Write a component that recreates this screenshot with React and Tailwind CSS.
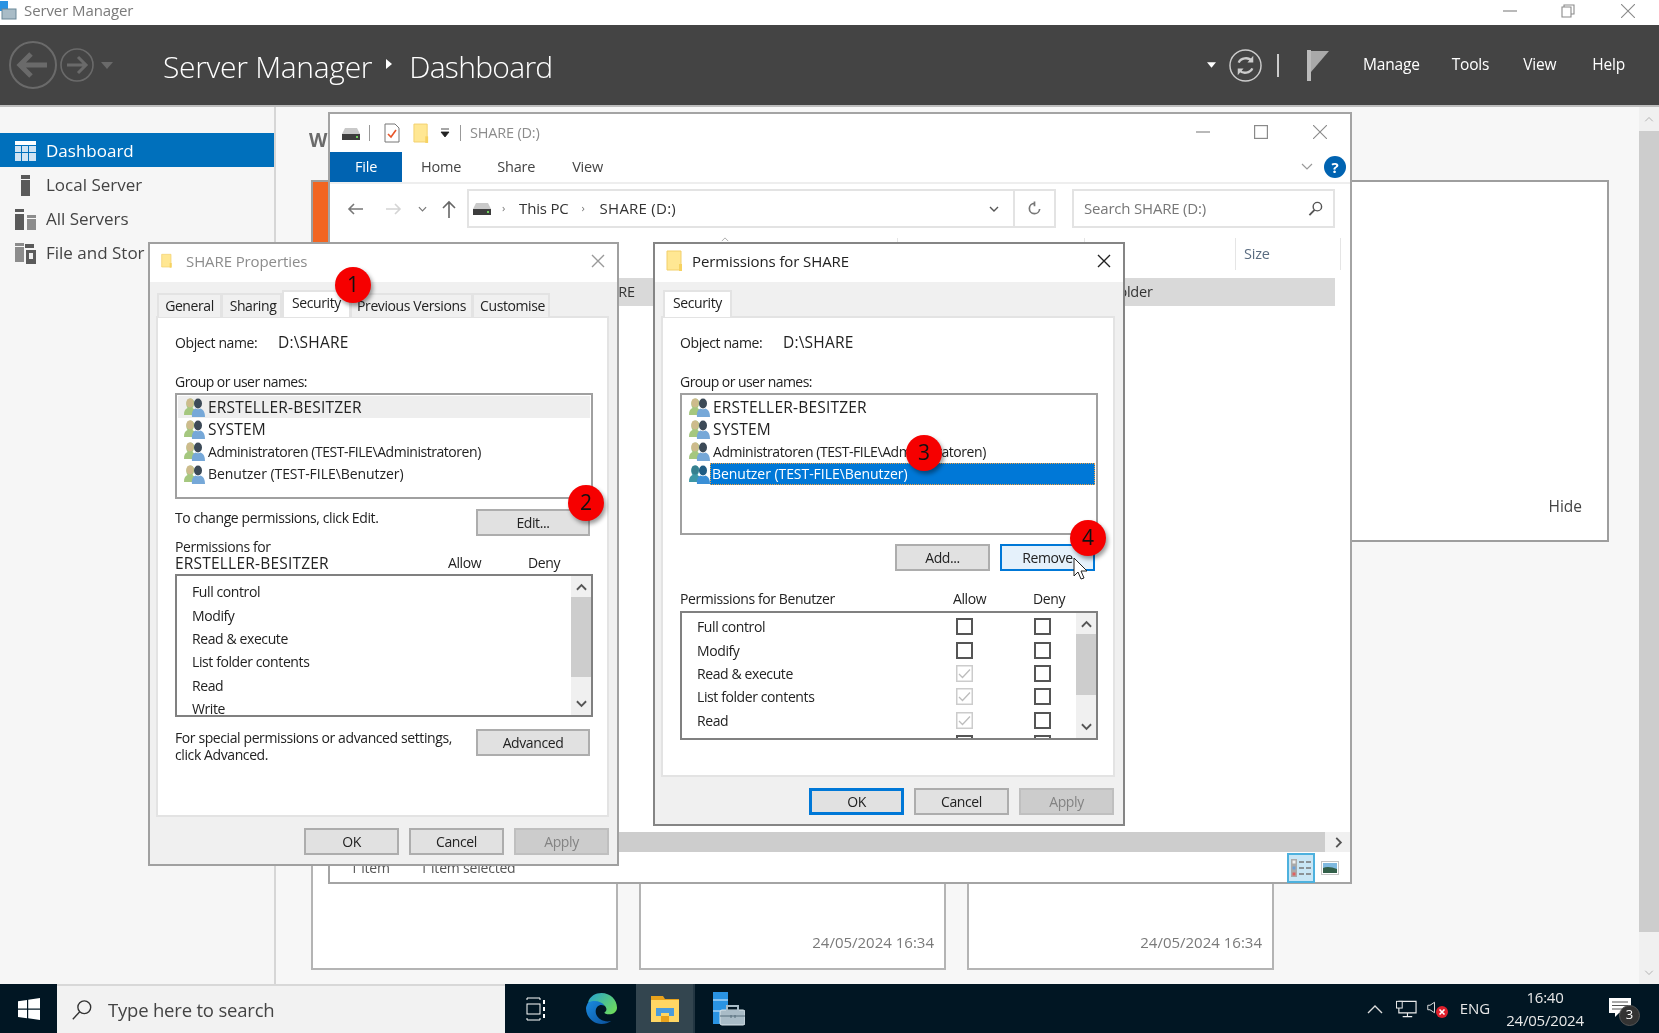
import React from "react";

const F = "font-['Open_Sans','Noto_Sans',sans-serif]";

function Folder({ cls = "w-[18px] h-[22px]" }) {
  return (
    <svg viewBox="0 0 18 22" className={cls}>
      <path d="M1 1h14v19H1z" fill="#ffe793" stroke="#f2cf6a" strokeWidth="1" />
      <path d="M13 14h3v7h-3z" fill="#f6d261" />
    </svg>
  );
}

function Drive({ cls = "w-[18px] h-[13px]" }) {
  return (
    <svg viewBox="0 0 18 13" className={cls}>
      <path d="M3 1h12l3 6v5H0V7z" fill="#c9c9c9" />
      <rect x="0" y="7" width="18" height="6" fill="#3d3d3d" />
      <rect x="14" y="9" width="2" height="2" fill="#6fd05c" />
    </svg>
  );
}

function Users({ selected }) {
  return (
    <svg viewBox="0 0 21 20" className="w-[21px] h-[20px] shrink-0">
      <path d="M0 18c0-4 1-6 3.500-7C1.500 8 2 2 6 1.500 9 1.500 11 4 10 7c-.3 2-1 3-1.500 4 2 1 3 3 3 7z" fill={selected ? "#3d97a6" : "#a5c77f"} />
      <ellipse cx="6" cy="6" rx="3.600" ry="4.400" fill={selected ? "#36808f" : "#cdbb8c"} />
      <path d="M8 20c-.5-5 1-7.500 3.500-8.500 1.500 1 3.500 1 5 0 2.500 1 4.500 3 4.500 8.500z" fill={selected ? "#3a8fd6" : "#76a8d8"} />
      <ellipse cx="14" cy="6.500" rx="4" ry="5" fill={selected ? "#1f5c84" : "#3c4a57"} />
    </svg>
  );
}

function Badge({ n, x, y }) {
  return (
    <div
      style={{ left: x - 18, top: y - 18 }}
      className={`absolute z-20 w-[36px] h-[36px] rounded-full bg-[#f60000] shadow-[2px_3px_4px_rgba(0,0,0,0.4)] flex items-center justify-center text-[21px] text-[#111] ${F}`}
    >
      {n}
    </div>
  );
}

function Btn({ children, w = "w-[95px]", cls = "bg-[#e1e1e1] border-[#adadad] text-[#222]" }) {
  return (
    <div className={`${w} h-[27px] shrink-0 border-2 flex items-center justify-center text-[14px] ${cls}`}>
      {children}
    </div>
  );
}

function Chevron({ up }) {
  return (
    <svg viewBox="0 0 12 8" className="w-[11px] h-[8px]">
      <path d={up ? "M1 7l5-5 5 5" : "M1 1l5 5 5-5"} fill="none" stroke="#555" strokeWidth="2" />
    </svg>
  );
}

function Scroll({ h, thumbTop, thumbH }) {
  return (
    <div className="w-[20px] shrink-0 flex flex-col bg-[#f0f0f0]" style={{ height: h }}>
      <div className="flex items-center justify-center shrink-0" style={{ height: thumbTop }}>
        <Chevron up />
      </div>
      <div className="bg-[#cdcdcd] shrink-0" style={{ height: thumbH }} />
      <div className="flex-1 flex items-end justify-center pb-[7px]">
        <Chevron />
      </div>
    </div>
  );
}

function Dialog({ title, active, x, y, w, h, tabs, panelH, icon, children }) {
  return (
    <div
      style={{ left: x, top: y, width: w, height: h }}
      className={`absolute border-2 ${active ? "border-[#858585]" : "border-[#a0a0a0]"} bg-[#f0f0f0] flex flex-col text-[14px] text-[#222] tracking-[-0.4px] ${F}`}
    >
      <div className="h-[38px] bg-white flex items-center pb-[4px] pl-[11px] pr-[10px] shrink-0">
        {icon}
        <span className={`text-[15px] tracking-[-0.1px] ${active ? "ml-[8px] text-[#222]" : "ml-[13px] text-[#8c8c8c]"}`}>{title}</span>
        <svg viewBox="0 0 14 14" className="ml-auto mr-[2px] w-[14px] h-[14px]">
          <path d="M1 1l12 12M13 1L1 13" stroke={active ? "#222" : "#999"} strokeWidth="1.4" />
        </svg>
      </div>
      <div className="h-[26px] mt-[9px] pl-[8px] flex items-end shrink-0 relative z-10 -mb-[1px]">
        {tabs.map((t) => (
          <div
            key={t.label}
            style={{ width: t.w }}
            className={
              t.on
                ? "h-[27px] bg-white border-2 border-b-0 border-[#e3e3e3] flex items-center justify-center pb-[4px]"
                : `h-[24px] bg-[#f0f0f0] border-2 border-b-0 border-[#e3e3e3] -ml-[1px] flex items-center justify-center pb-[2px] ${t.cls || ""}`
            }
          >
            {t.label}
          </div>
        ))}
      </div>
      <div
        style={{ height: panelH }}
        className="ml-[6px] mr-[8px] shrink-0 bg-white border-2 border-[#e3e3e3] pl-[17px] pt-[14px]"
      >
        {children}
      </div>
      <div className={`flex justify-end gap-[10px] mt-[11px] ${active ? "pr-[9px]" : "pr-[8px]"}`}>
        <Btn cls={active ? "bg-[#e1e1e1] border-[#0078d7] border-[3px] text-[#222]" : "bg-[#e1e1e1] border-[#adadad] text-[#222]"}>OK</Btn>
        <Btn>Cancel</Btn>
        <Btn cls="bg-[#cccccc] border-[#bfbfbf] text-[#838383]">Apply</Btn>
      </div>
    </div>
  );
}

function Caps({ children }) {
  return <span className="pt-[1px] text-[15.5px] tracking-[0.2px]">{children}</span>;
}

function ObjName() {
  return (
    <>
      <div className="h-[20px] flex items-center">
        <span className="w-[103px]">Object name:</span>
        <Caps>D:\SHARE</Caps>
      </div>
      <div className="h-[20px] mt-[19px] flex items-center tracking-[-0.55px]">Group or user names:</div>
    </>
  );
}

const NAMES = ["ERSTELLER-BESITZER", "SYSTEM", "Administratoren (TEST-FILE\\Administratoren)", "Benutzer (TEST-FILE\\Benutzer)"];

function Name({ i }) {
  if (i < 2) return <Caps>{NAMES[i]}</Caps>;
  if (i === 2) return <span className="tracking-[-0.45px]">{NAMES[i]}</span>;
  return <span className="tracking-[-0.05px]">{NAMES[i]}</span>;
}

function Properties() {
  const perms = ["Full control", "Modify", "Read & execute", "List folder contents", "Read", "Write"];
  return (
    <Dialog
      title="SHARE Properties"
      x={148}
      y={242}
      w={471}
      h={624}
      panelH={501}
      icon={<Folder cls="w-[12px] h-[20px]" />}
      tabs={[
        { label: "General", w: 65 },
        { label: "Sharing", w: 61, cls: "pl-[3px]" },
        { label: "Security", w: 69, on: true },
        { label: "Previous Versions", w: 123 },
        { label: "Customise", w: 78, cls: "pl-[3px]" },
      ]}
    >
      <ObjName />
      <div className="w-[418px] h-[106px] mt-[2px] border-2 border-[#a0a0a0] bg-white pt-[1px] px-[1px]">
        {NAMES.map((n, i) => (
          <div key={n} className={`h-[22.2px] flex items-center pl-[6px] gap-[3px] ${i === 0 ? "bg-[#eeeeee]" : ""}`}>
            <Users />
            <Name i={i} />
          </div>
        ))}
      </div>
      <div className="w-[415px] mt-[10px] flex">
        <span className="leading-[17px]">To change permissions, click Edit.</span>
        <div className="ml-auto"><Btn w="w-[114px]">Edit...</Btn></div>
      </div>
      <div className="mt-[2px] leading-[16px] w-[418px]">
        <div className="pt-[1px]">Permissions for</div>
        <div className="flex items-center">
          <span className="w-[273px] text-[15.5px] tracking-[0.2px]">ERSTELLER-BESITZER</span>
          <span className="w-[80px]">Allow</span>
          <span>Deny</span>
        </div>
      </div>
      <div className="w-[418px] h-[143px] mt-[3px] border-2 border-[#808080] flex overflow-hidden">
        <div className="flex-1 pl-[15px] pt-[4px]">
          {perms.map((p) => (
            <div key={p} className="h-[23.4px] flex items-center">{p}</div>
          ))}
        </div>
        <Scroll h={139} thumbTop={21} thumbH={80} />
      </div>
      <div className="w-[415px] mt-[12px] flex">
        <div className="leading-[17px]">
          <div>For special permissions or advanced settings,</div>
          <div>click Advanced.</div>
        </div>
        <div className="ml-auto"><Btn w="w-[114px]">Advanced</Btn></div>
      </div>
    </Dialog>
  );
}

function Box({ on }) {
  return on ? (
    <svg viewBox="0 0 17 17" className="w-[17px] h-[17px]">
      <rect x="0.75" y="0.75" width="15.5" height="15.5" fill="#fff" stroke="#cccccc" strokeWidth="1.5" />
      <path d="M3 9l3.5 3.5L14 4.5" fill="none" stroke="#bdbdbd" strokeWidth="1.3" />
    </svg>
  ) : (
    <div className="w-[17px] h-[17px] border-2 border-[#555] bg-white" />
  );
}

function Permissions() {
  const perms = [
    ["Full control", false],
    ["Modify", false],
    ["Read & execute", true],
    ["List folder contents", true],
    ["Read", true],
    ["", false],
  ];
  return (
    <Dialog
      active
      title="Permissions for SHARE"
      x={653}
      y={242}
      w={472}
      h={584}
      panelH={461}
      icon={<Folder />}
      tabs={[{ label: "Security", w: 69, on: true }]}
    >
      <ObjName />
      <div className="w-[418px] h-[142px] mt-[2px] border-2 border-[#a0a0a0] bg-white pt-[1px] px-[1px]">
        {NAMES.map((n, i) => (
          <div key={n} className="h-[22.2px] flex items-center pl-[6px]">
            <Users selected={i === 3} />
            {i === 3 ? (
              <span className="pl-[1px] w-[386px] h-[22px] flex items-center bg-[#0078d7] text-white border border-dotted border-[#f0a040] tracking-[-0.05px]">{n}</span>
            ) : (
              <span className="ml-[3px] flex"><Name i={i} /></span>
            )}
          </div>
        ))}
      </div>
      <div className="w-[415px] mt-[9px] flex justify-end gap-[10px]">
        <Btn>Add...</Btn>
        <Btn cls="bg-[#e5f1fb] border-[#0078d7] text-[#222]">Remove</Btn>
      </div>
      <div className="w-[418px] mt-[17px] h-[20px] flex items-center">
        <span className="w-[273px]">Permissions for Benutzer</span>
        <span className="w-[80px]">Allow</span>
        <span>Deny</span>
      </div>
      <div className="w-[418px] h-[129px] mt-[3px] border-2 border-[#808080] flex overflow-hidden">
        <div className="flex-1 pl-[15px] pt-[2px]">
          {perms.map(([p, on], i) => (
            <div key={i} className="h-[23.4px] flex items-center">
              <span className="w-[259px]">{p}</span>
              <Box on={on} />
              <span className="w-[61px]" />
              <Box />
            </div>
          ))}
        </div>
        <Scroll h={125} thumbTop={21} thumbH={61} />
      </div>
    </Dialog>
  );
}

function WinCtl() {
  const c = "#8a8a8a";
  return (
    <div className="flex items-center -mt-[3px]">
      <svg viewBox="0 0 14 14" className="w-[14px] h-[14px]"><path d="M0 7h14" stroke={c} strokeWidth="1.2" /></svg>
      <svg viewBox="0 0 14 14" className="ml-[44px] w-[14px] h-[14px]"><rect x="0.6" y="0.6" width="12.8" height="12.8" fill="none" stroke={c} strokeWidth="1.2" /></svg>
      <svg viewBox="0 0 14 14" className="ml-[45px] w-[14px] h-[14px]"><path d="M0 0l14 14M14 0L0 14" stroke={c} strokeWidth="1.1" /></svg>
    </div>
  );
}

function Explorer() {
  return (
    <div className={`absolute left-[328px] top-[112px] w-[1024px] h-[772px] bg-white border-2 border-[#a4a4a4] flex flex-col text-[14.5px] tracking-[-0.2px] text-[#333] ${F}`}>
      <div className="h-[38px] shrink-0 flex items-center pl-[12px] pr-[23px] text-[#8c8c8c]">
        <Drive />
        <span className="w-px h-[16px] bg-[#999] ml-[9px]" />
        <svg viewBox="0 0 16 20" className="ml-[14px] w-[16px] h-[20px]">
          <path d="M1 1h10l4 4v14H1z" fill="#fff" stroke="#777" />
          <path d="M4 11l3 3 5-7" fill="none" stroke="#e8562a" strokeWidth="1.6" />
        </svg>
        <Folder cls="ml-[13px] w-[17px] h-[21px]" />
        <svg viewBox="0 0 10 10" className="ml-[10px] w-[10px] h-[10px]">
          <path d="M1 1h8M1 4h8l-4 5z" fill="#222" stroke="#222" strokeWidth="0.8" />
        </svg>
        <span className="w-px h-[16px] bg-[#999] ml-[10px]" />
        <span className="ml-[9px]">SHARE (D:)</span>
        <div className="ml-auto"><WinCtl /></div>
      </div>
      <div className="h-[30px] shrink-0 flex items-center border-b-2 border-[#eeeeee] box-content pr-[3px]">
        <div className="w-[72px] h-full bg-[#0063b1] text-white flex items-center justify-center">File</div>
        <span className="ml-[19px] text-[#444]">Home</span>
        <span className="ml-[36px] text-[#444]">Share</span>
        <span className="ml-[37px] text-[#444]">View</span>
        <svg viewBox="0 0 12 8" className="ml-auto w-[12px] h-[8px]"><path d="M1 1l5 5 5-5" fill="none" stroke="#999" strokeWidth="1.2" /></svg>
        <div className="ml-[11px] mr-[1px] w-[22px] h-[22px] rounded-full bg-[#0063b1] text-white font-bold flex items-center justify-center text-[15px]">?</div>
      </div>
      <div className="h-[39px] mt-[5px] shrink-0 flex items-center pl-[17px] text-[15px]">
        <svg viewBox="0 0 16 14" className="w-[16px] h-[14px]"><path d="M16 7H2M7 2L2 7l5 5" fill="none" stroke="#777" strokeWidth="1.6" /></svg>
        <svg viewBox="0 0 16 14" className="ml-[23px] w-[16px] h-[14px]"><path d="M0 7h14M9 2l5 5-5 5" fill="none" stroke="#d4d4d4" strokeWidth="1.6" /></svg>
        <svg viewBox="0 0 10 6" className="ml-[16px] w-[9px] h-[6px]"><path d="M1 1l4 4 4-4" fill="none" stroke="#777" strokeWidth="1.3" /></svg>
        <svg viewBox="0 0 14 18" className="ml-[15px] w-[14px] h-[18px]"><path d="M7 18V2M1 8l6-6 6 6" fill="none" stroke="#666" strokeWidth="1.6" /></svg>
        <div className="ml-[11px] w-[589px] h-[39px] border-2 border-[#e3e3e3] flex items-center pl-[4px] text-[#333]">
          <Drive />
          <span className="ml-[11px] text-[#777] text-[11px]">›</span>
          <span className="ml-[14px]">This PC</span>
          <span className="ml-[13px] text-[#777] text-[11px]">›</span>
          <span className="ml-[15px] tracking-[0.25px]">SHARE (D:)</span>
          <svg viewBox="0 0 10 6" className="ml-auto mr-[14px] w-[10px] h-[6px]"><path d="M1 1l4 4 4-4" fill="none" stroke="#555" strokeWidth="1.4" /></svg>
          <div className="w-[2px] h-full bg-[#e3e3e3]" />
          <svg viewBox="0 0 16 16" className="mx-[12px] w-[15px] h-[16px]">
            <path d="M8 2a5.5 5.5 0 1 0 5.500 6M8 0v5" fill="none" stroke="#777" strokeWidth="1.8" />
          </svg>
        </div>
        <div className="ml-[16px] w-[263px] h-[39px] border-2 border-[#e3e3e3] flex items-center pl-[10px] pr-[10px] text-[#777]">
          <span>Search SHARE (D:)</span>
          <svg viewBox="0 0 16 16" className="ml-auto w-[15px] h-[15px]">
            <circle cx="10" cy="6" r="4.5" fill="none" stroke="#555" strokeWidth="1.5" />
            <path d="M7 9.5L1.5 15" stroke="#555" strokeWidth="2" />
          </svg>
        </div>
      </div>
      <div className="h-[40px] mt-[6px] shrink-0 flex items-center relative">
        <span className="w-[391px]" />
        <svg viewBox="0 0 10 6" className="w-[8px] h-[5px] -mt-[30px]"><path d="M1 5l4-4 4 4" fill="none" stroke="#999" /></svg>
        <span className="ml-[168px] w-px h-[32px] bg-[#e5e5e5]" />
        <span className="ml-[186px] w-px h-[32px] bg-[#e5e5e5]" />
        <span className="ml-[150px] w-px h-[32px] bg-[#e5e5e5]" />
        <span className="ml-[8px] text-[#5a6c80]">Size</span>
        <span className="ml-[70px] w-px h-[32px] bg-[#e5e5e5]" />
      </div>
      <div className="h-[28px] mt-[4px] shrink-0 ml-[253px] mr-[15px] bg-[#d9d9d9] flex items-center text-[#333]">
        <span className="ml-[8px] w-[497px]">SHARE</span>
        <span>File folder</span>
      </div>
      <div className="flex-1" />
      <div className="h-[20px] shrink-0 flex">
        <div className="flex-1 bg-[#cdcdcd]" />
        <div className="w-[25px] bg-[#f0f0f0] flex items-center justify-center pl-[3px]">
          <svg viewBox="0 0 8 12" className="w-[8px] h-[11px]"><path d="M1 1l5 5-5 5" fill="none" stroke="#555" strokeWidth="2" /></svg>
        </div>
      </div>
      <div className="h-[30px] shrink-0 flex items-center pl-[20px] text-[14px] text-[#555] pt-[1px]">
        <span>1 item</span>
        <span className="ml-[30px]">1 item selected</span>
        <div className="ml-auto w-[28px] h-[30px] bg-[#c9e6f5] border-2 border-[#4db1de] flex items-center justify-center">
          <svg viewBox="0 0 20 18" className="w-[20px] h-[18px]">
            <rect x="0" y="0" width="6" height="18" fill="#aaa" />
            <rect x="1.500" y="1.500" width="3" height="3" fill="#eee" />
            <rect x="1.500" y="7.500" width="3" height="3" fill="#6aa0d8" />
            <rect x="1.500" y="13.500" width="3" height="3" fill="#e06060" />
            <path d="M8 3h5M15 3h5M8 9h5M15 9h5M8 15h5M15 15h5" stroke="#777" strokeWidth="1.400" />
          </svg>
        </div>
        <div className="w-[29px] flex justify-center">
          <svg viewBox="0 0 18 14" className="w-[18px] h-[14px]">
            <rect x="0" y="0" width="18" height="14" fill="#c4c4c4" />
            <rect x="1" y="1" width="16" height="12" fill="#fff" />
            <rect x="2" y="2" width="14" height="10" fill="#7fb9df" />
            <path d="M2 7c4-2 9-1 14 1v4H2z" fill="#33604a" />
          </svg>
        </div>
        <span className="w-[6px]" />
      </div>
    </div>
  );
}

function Sidebar() {
  const Ic = ({ k }) => {
    const c = k === "d" ? "#fff" : "#5a5a5a";
    if (k === "d")
      return (
        <svg viewBox="0 0 21 20" className="w-[21px] h-[20px]">
          <rect width="21" height="4" fill="#fff" />
          <path d="M0 5h6v6H0zM7 5h6v6H7zM14 5h7v6h-7zM0 12h6v8H0zM7 12h6v8H7zM14 12h7v8h-7z" fill="#cfe3f3" />
        </svg>
      );
    if (k === "l")
      return (
        <svg viewBox="0 0 21 21" className="w-[21px] h-[21px]">
          <path d="M6 0h9v4H6zM6 5h9v16H6z" fill={c} />
        </svg>
      );
    if (k === "a")
      return (
        <svg viewBox="0 0 21 21" className="w-[21px] h-[21px]">
          <path d="M0 0h9v3H0zM0 5h9v16H0z" fill={c} />
          <path d="M12 6h9v3h-9zM12 10h9v11h-9z" fill="#8c8c8c" />
        </svg>
      );
    return (
      <svg viewBox="0 0 21 22" className="w-[21px] h-[22px]">
        <path d="M0 1h9v3H0zM0 5h9v15H0z" fill="#8c8c8c" />
        <path d="M10 2h9v4h-9z" fill="#5a5a5a" />
        <path d="M11 8h10v14H11z" fill="#5a5a5a" />
        <path d="M14 11h4v6h-4z" fill="#eee" />
      </svg>
    );
  };
  return (
    <div className={`w-[276px] shrink-0 bg-[#f6f6f6] border-r-2 border-[#d6d6d6] pt-[26px] text-[17px] text-[#444] ${F}`}>
      {[["d", "Dashboard"], ["l", "Local Server"], ["a", "All Servers"], ["f", "File and Stor"]].map(([k, t]) => (
        <div key={k} className={`h-[34px] flex items-center pl-[15px] pt-[2px] gap-[10px] whitespace-nowrap overflow-hidden ${k === "d" ? "bg-[#0070bc] text-white" : ""}`}>
          <Ic k={k} />
          <span>{t}</span>
        </div>
      ))}
    </div>
  );
}

function Tile({ stamp }) {
  return (
    <div className="w-[307px] h-[440px] bg-white border-2 border-[#b4b4b4] flex items-end justify-end pr-[10px] pb-[15px] text-[15px] text-[#7a7a7a]">
      {stamp && "24/05/2024 16:34"}
    </div>
  );
}

function Main() {
  return (
    <div className={`flex-1 min-w-0 bg-[#f7f7f7] pl-[35px] pr-[30px] ${F}`}>
      <div className="h-[73px] flex items-end pb-[26px] -ml-[2px] text-[19px] font-bold text-[#6b6b6b]">W</div>
      <div className="h-[362px] bg-white border-2 border-[#9e9e9e] flex">
        <div className="w-[40px] bg-[#f26522]" />
        <div className="flex-1 flex items-end justify-end pr-[25px] pb-[22px] text-[15.5px] text-[#444]">Hide</div>
      </div>
      <div className="mt-[-12px] flex gap-[21px]">
        <Tile />
        <Tile stamp />
        <Tile stamp />
      </div>
    </div>
  );
}

function Taskbar() {
  return (
    <div className={`h-[49px] shrink-0 bg-[#011623] flex items-center text-white ${F}`}>
      <div className="w-[57px] flex justify-center">
        <svg viewBox="0 0 22 22" className="w-[22px] h-[22px]">
          <path d="M0 3.2l9-1.3v8.6H0zM10.2 1.7L22 0v10.5H10.2zM0 11.7h9v8.5l-9-1.3zM10.200 11.700H22V22l-11.800-1.700z" fill="#fff" />
        </svg>
      </div>
      <div className="w-[448px] h-[49px] bg-[#f2f2f2] border-t-2 border-[#d8d8d8] flex items-center pl-[14px] text-[#444] text-[18.5px] tracking-[-0.2px]">
        <svg viewBox="0 0 24 24" className="w-[22px] h-[22px]">
          <circle cx="14.5" cy="9" r="7" fill="none" stroke="#333" strokeWidth="1.5" />
          <path d="M9.5 14L2 22" stroke="#333" strokeWidth="1.5" />
        </svg>
        <span className="ml-[15px]">Type here to search</span>
      </div>
      <svg viewBox="0 0 20 24" className="ml-[21px] w-[20px] h-[24px]">
        <path d="M1 1h13M1 23h13M1 21v2M14 21v2M1 1v2M14 1v2" stroke="#fff" fill="none" />
        <rect x="1" y="7" width="13" height="10" fill="none" stroke="#fff" />
        <path d="M18 3v4M18 10v4M18 17v4" stroke="#fff" strokeWidth="2" />
      </svg>
      <svg viewBox="0 0 32 34" className="ml-[40px] w-[31px] h-[33px]">
        <defs>
          <linearGradient id="edgeA" x1="0" y1="0.2" x2="1" y2="0.8">
            <stop offset="0" stopColor="#2aa5c8" />
            <stop offset="1" stopColor="#6fdc5a" />
          </linearGradient>
          <linearGradient id="edgeB" x1="0" y1="0" x2="1" y2="1">
            <stop offset="0" stopColor="#1a8be0" />
            <stop offset="1" stopColor="#0a4f9a" />
          </linearGradient>
        </defs>
        <path d="M2 11C4 4 10 1 16 1c9 0 16 7 16 15 0 4-3 7-8 7-3 0-5-1-5-2 2-1 3-3 1-6-3-4-13-6-18-4z" fill="url(#edgeA)" />
        <path d="M2 11c5-3 14-2 17 3-5-2-9 1-9 6 0 6 7 12 16 10-3 2-6 3-10 3C8 33 0 26 0 17c0-2 1-4 2-6z" fill="url(#edgeB)" />
      </svg>
      <div className="ml-[19px] w-[59px] h-[49px] bg-[#33454f] border-r-2 border-[#233642] flex items-center justify-center">
        <svg viewBox="0 0 28 26" className="w-[28px] h-[26px]">
          <path d="M0 0h12l2 3h14v4H0z" fill="#e8a21c" />
          <path d="M0 4h28v22H0z" fill="#ffd664" />
          <path d="M5 20v-8h18v8h-5v-3h-8v3z" fill="#4a9bdc" />
          <path d="M10 20h8v6h-8z" fill="#e8a21c" />
        </svg>
      </div>
      <svg viewBox="0 0 32 36" className="ml-[18px] mt-[3px] w-[32px] h-[36px]">
        <rect x="0" y="0" width="15" height="32" fill="#2a93e2" />
        <path d="M0 8h15M0 19h15" stroke="#dff2ff" strokeWidth="1.200" />
        <rect x="7" y="18" width="25" height="15" rx="2" fill="#a9bcc7" stroke="#d9e4ea" />
        <rect x="14" y="14" width="11" height="5" fill="none" stroke="#a9bcc7" strokeWidth="2" />
        <path d="M7 24h25M18 23v3M22 23v3" stroke="#566f7d" />
      </svg>
      <div className="ml-auto flex items-center text-[15px] text-[#e8e8e8]">
        <svg viewBox="0 0 16 10" className="w-[16px] h-[10px]"><path d="M1 9l7-7 7 7" fill="none" stroke="#ddd" strokeWidth="1.4" /></svg>
        <svg viewBox="0 0 22 18" className="ml-[13px] w-[21px] h-[18px]">
          <path d="M3 1h18v12H3zM12 13v4M7 17h10" fill="none" stroke="#eee" strokeWidth="1.2" />
          <rect x="0.5" y="1" width="6" height="7" fill="#011623" stroke="#eee" />
        </svg>
        <div className="ml-[10px] relative w-[21px] h-[18px]">
          <svg viewBox="0 0 12 16" className="w-[9px] h-[15px]"><path d="M1 5h3l6-4v14l-6-4H1z" fill="none" stroke="#ddd" strokeWidth="1.3" /></svg>
          <svg viewBox="0 0 12 12" className="absolute right-0 bottom-0 w-[12px] h-[12px]">
            <circle cx="6" cy="6" r="6" fill="#e0202c" />
            <path d="M3.500 3.500l5 5M8.500 3.500l-5 5" stroke="#fff" strokeWidth="1.600" />
          </svg>
        </div>
        <span className="ml-[2px] w-[50px] text-center">ENG</span>
        <div className="ml-[6px] w-[78px] text-center leading-[23px] tracking-[-0.2px]">
          <div>16:40</div>
          <div>24/05/2024</div>
        </div>
        <div className="ml-[25px] mr-[28px] relative w-[22px] h-[22px]">
          <svg viewBox="0 0 22 20" className="w-[22px] h-[20px]">
            <path d="M0 0h22v15H10l-4 4v-4H0z" fill="#fff" />
            <path d="M3 4h16M3 7.500h16M3 11h11" stroke="#555" />
          </svg>
          <div className="absolute left-[10px] top-[7px] w-[21px] h-[21px] rounded-full bg-[#333] border border-[#555] flex items-center justify-center text-[13px] text-white">3</div>
        </div>
      </div>
    </div>
  );
}

export default function App() {
  return (
    <div className={`relative w-[1659px] h-[1033px] overflow-hidden flex flex-col bg-white blur-[0.35px] ${F}`}>
      <div className="h-[25px] shrink-0 bg-white flex items-center text-[15px] text-[#7a7a7a] tracking-[-0.1px] pr-[24px] pb-[4px]">
        <svg viewBox="0 0 17 19" className="w-[17px] h-[19px]">
          <rect x="0" y="0" width="8" height="10" fill="#2a93e2" />
          <rect x="2" y="8" width="14" height="10" fill="#a9bcc7" stroke="#6a8797" />
        </svg>
        <span className="ml-[7px]">Server Manager</span>
        <div className="ml-auto flex items-center">
          <svg viewBox="0 0 14 14" className="w-[14px] h-[14px]"><path d="M0 7h14" stroke="#8a8a8a" strokeWidth="1.2" /></svg>
          <svg viewBox="0 0 14 14" className="ml-[44px] w-[14px] h-[14px]">
            <path d="M3 3V1h10v9h-3M1 3h9v10H1z" fill="none" stroke="#8a8a8a" strokeWidth="1.1" />
          </svg>
          <svg viewBox="0 0 14 14" className="ml-[46px] w-[14px] h-[14px]"><path d="M0 0l14 14M14 0L0 14" stroke="#8a8a8a" strokeWidth="1.1" /></svg>
        </div>
      </div>
      <div className="h-[82px] shrink-0 bg-[#444444] border-b-2 border-[#bdbdbd] flex items-center pl-[9px] text-white">
        <svg viewBox="0 0 48 48" className="w-[48px] h-[48px]">
          <circle cx="24" cy="24" r="23" fill="none" stroke="#6a6a6a" strokeWidth="2" />
          <path d="M38 24H12M22 13L11 24l11 11" fill="none" stroke="#6a6a6a" strokeWidth="5" />
        </svg>
        <svg viewBox="0 0 34 34" className="ml-[3px] w-[34px] h-[34px]">
          <circle cx="17" cy="17" r="16" fill="none" stroke="#6a6a6a" strokeWidth="1.6" />
          <path d="M7 17h18M18 9l8 8-8 8" fill="none" stroke="#6a6a6a" strokeWidth="3" />
        </svg>
        <svg viewBox="0 0 12 7" className="ml-[7px] w-[12px] h-[7px]"><path d="M0 0h12L6 7z" fill="#6a6a6a" /></svg>
        <span className="ml-[50px] pt-[2px] text-[30px] font-light tracking-[-0.3px]">Server Manager</span>
        <svg viewBox="0 0 6 10" className="ml-[14px] w-[6px] h-[10px] -mt-[2px]"><path d="M0 0l6 5-6 5z" fill="#fff" /></svg>
        <span className="ml-[17px] pt-[2px] text-[30px] font-light tracking-[-0.7px]">Dashboard</span>
        <div className="ml-auto flex items-center pr-[34px] text-[15.5px] tracking-[-0.2px]">
          <svg viewBox="0 0 10 6" className="w-[9px] h-[6px]"><path d="M0 0h10L5 6z" fill="#fff" /></svg>
          <svg viewBox="0 0 34 34" className="ml-[13px] w-[33px] h-[33px]">
            <circle cx="17" cy="17" r="16" fill="none" stroke="#ccc" strokeWidth="1.5" />
            <path d="M10 14c2-5 10-6 13-2M24 20c-2 5-10 6-13 2" fill="none" stroke="#ccc" strokeWidth="2.4" />
            <path d="M25 7v7h-6zM9 27v-7h6z" fill="#ccc" />
          </svg>
          <span className="ml-[15px] w-[2px] h-[23px] bg-[#ccc]" />
          <svg viewBox="0 0 22 31" className="ml-[28px] w-[22px] h-[31px]">
            <rect x="0" y="0" width="4" height="31" fill="#bbb" />
            <path d="M4 1h18L4 22z" fill="#a9a9a9" />
          </svg>
          <span className="ml-[34px]">Manage</span>
          <span className="ml-[32px]">Tools</span>
          <span className="ml-[34px]">View</span>
          <span className="ml-[36px]">Help</span>
        </div>
      </div>
      <div className="flex-1 min-h-0 flex overflow-hidden">
        <Sidebar />
        <Main />
        <div className="w-[20px] shrink-0 bg-[#f0f0f0] flex flex-col">
          <div className="h-[24px] flex items-center justify-center">
            <svg viewBox="0 0 12 8" className="w-[10px] h-[6px]"><path d="M1 7l5-5 5 5" fill="none" stroke="#aaa" strokeWidth="1.2" /></svg>
          </div>
          <div className="h-[801px] bg-[#cdcdcd]" />
          <div className="flex-1 flex items-end justify-center pb-[8px]">
            <svg viewBox="0 0 12 8" className="w-[10px] h-[6px]"><path d="M1 1l5 5 5-5" fill="none" stroke="#aaa" strokeWidth="1.2" /></svg>
          </div>
        </div>
      </div>
      <Taskbar />
      <Explorer />
      <Properties />
      <Permissions />
      <Badge n="1" x={353} y={285} />
      <Badge n="2" x={586} y={503} />
      <Badge n="3" x={924} y={453} />
      <Badge n="4" x={1088} y={538} />
      <svg viewBox="0 0 16 24" className="absolute z-20 left-[1073px] top-[557px] w-[16px] h-[24px]">
        <path d="M1 1v18l4-4 3 7 3-1-3-7h6z" fill="#fff" stroke="#222" strokeWidth="1" />
      </svg>
    </div>
  );
}
